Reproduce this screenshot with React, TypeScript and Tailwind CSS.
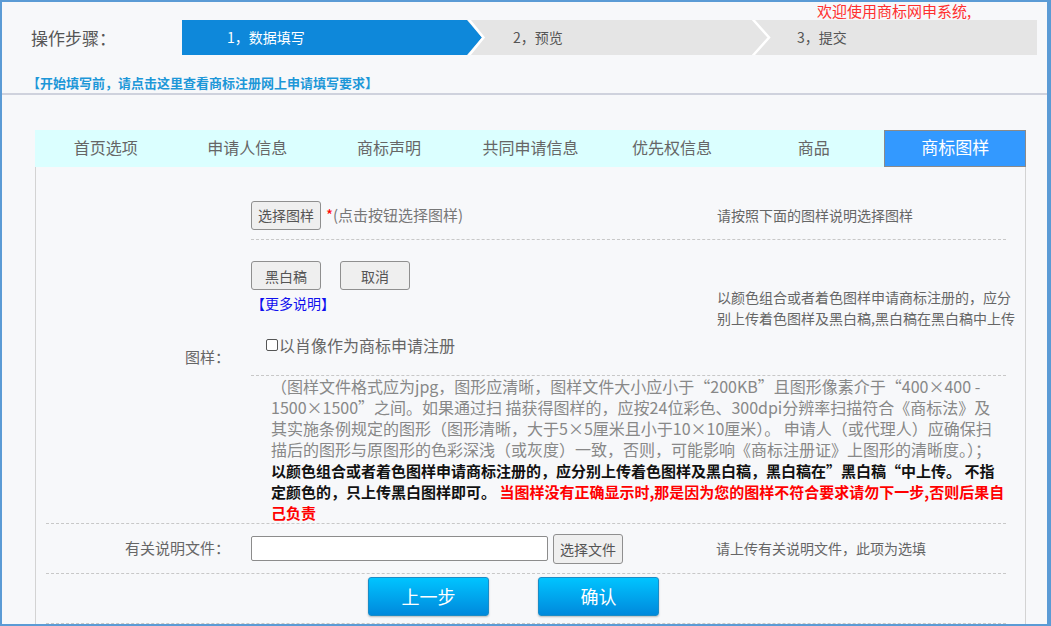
import React from "react";

const tabs = ["首页选项", "申请人信息", "商标声明", "共同申请信息", "优先权信息", "商品", "商标图样"];

const GrayButton = ({ label, className = "" }: { label: string; className?: string }) => (
  <button
    className={
      "h-[29px] w-[70px] shrink-0 rounded-[3px] border border-[#8f8f8f] bg-[#efefef] text-[14px] leading-none text-[#555] " +
      className
    }
  >
    {label}
  </button>
);

const BlueButton = ({ label }: { label: string }) => (
  <button className="h-[39px] w-[121px] rounded-[3px] border border-[#1a8cc6] bg-linear-to-b from-[#00c4ff] to-[#0089dc] text-[18px] text-white shadow-[0_1px_2px_rgba(0,0,0,0.25)]">
    {label}
  </button>
);

const App = () => {
  return (
    <div className="h-[626px] w-[1051px] overflow-hidden border-t-2 border-r-4 border-b-2 border-l-2 border-[#5b9bd5] bg-[#f7f8fa] font-['Noto_Sans_CJK_SC','Noto_Sans',sans-serif] flex flex-col">
      {/* header */}
      <div className="border-b-2 border-[#cfd2dd] pb-[2px]">
        <div className="h-[18px] pl-[815px] text-[15px] leading-[17px] text-[#ff3030] whitespace-nowrap">
          欢迎使用商标网申系统,
        </div>
        <div className="flex h-[35px] items-center pl-[29px]">
          <div className="w-[151px] text-[17px] text-[#555]">操作步骤：</div>
          <div className="flex h-[35px] w-[855px] bg-[#e5e5e5] text-[14px]">
            <div className="relative flex w-[284px] items-center bg-[#0e88da] pl-[45px] text-white">
              1，数据填写
              <svg className="absolute top-0 left-full z-10" width="24" height="35" viewBox="0 0 24 35">
                <polygon points="0,0 1,0 16,17.5 1,35 0,35" fill="#0e88da" />
                <polyline points="2.5,-1 17.5,17.5 2.5,36" fill="none" stroke="#fff" strokeWidth="2.5" />
              </svg>
            </div>
            <div className="relative flex w-[286px] items-center pl-[47px] text-[#555]">
              2，预览
              <svg className="absolute top-0 left-full z-10" width="24" height="35" viewBox="0 0 24 35">
                <polyline points="0.5,-1 17,17.5 0.5,36" fill="none" stroke="#fff" strokeWidth="2.5" />
              </svg>
            </div>
            <div className="flex flex-1 items-center pl-[45px] text-[#555]">3，提交</div>
          </div>
        </div>
        <div className="mt-[20px] pl-[25px] text-[13px] leading-[16px] font-bold text-[#1d97d8]">
          【开始填写前，请点击这里查看商标注册网上申请填写要求】
        </div>
      </div>

      {/* tabs */}
      <div className="mt-[35px] ml-[33px] grid h-[39px] w-[991px] grid-cols-7 bg-[#dbffff]">
        {tabs.map((t, i) =>
          i === tabs.length - 1 ? (
            <div key={t} className="flex items-center justify-center border border-[#8a8a8a] bg-[#3399ff] pb-[3px] text-[17px] text-white">
              {t}
            </div>
          ) : (
            <div key={t} className="flex items-center justify-center pb-[3px] text-[16px] text-[#666]">
              {t}
            </div>
          )
        )}
      </div>

      {/* content */}
      <div className="ml-[33px] w-[991px] flex-1 border-r border-l border-[#d3d3d3] pt-[24px] pr-[19px] pl-[10px]">
        <div className="flex border-b border-dashed border-[#c8c8c8]">
          <div className="flex w-[205px] shrink-0 items-center justify-end pr-[21px] text-[15px] text-[#666]">图样：</div>
          <div className="flex min-w-0 flex-1 flex-col">
            <div className="flex h-[49px] items-center border-b border-dashed border-[#c8c8c8]">
              <div className="flex w-[466px] shrink-0 items-center">
                <GrayButton label="选择图样" />
                <span className="ml-[5px] text-[15px] text-[#ff0000]">*</span>
                <span className="text-[15px] text-[#777]">(点击按钮选择图样)</span>
              </div>
              <div className="text-[14px] text-[#666] whitespace-nowrap">请按照下面的图样说明选择图样</div>
            </div>
            <div className="flex h-[136px] border-b border-dashed border-[#c8c8c8]">
              <div className="flex w-[466px] shrink-0 flex-col pt-[21px]">
                <div className="flex gap-[19px]">
                  <GrayButton label="黑白稿" />
                  <GrayButton label="取消" />
                </div>
                <div className="mt-[5px] text-[14px] leading-[16px] text-[#1010ee]">【更多说明】</div>
                <div className="mt-[24px] flex items-center pl-[15px] text-[16px] leading-[20px] text-[#666]">
                  <span className="mr-[1px] inline-block h-[12px] w-[12px] rounded-[2px] border border-[#555] bg-white" />
                  以肖像作为商标申请注册
                </div>
              </div>
              <div className="flex items-center text-[14px] leading-[21px] text-[#666] whitespace-nowrap">
                <div>
                  以颜色组合或者着色图样申请商标注册的，应分
                  <br />
                  别上传着色图样及黑白稿,黑白稿在黑白稿中上传
                </div>
              </div>
            </div>
            <div className="pl-[20px] text-[16px] leading-[21px] text-[#888] whitespace-nowrap">
              （图样文件格式应为jpg，图形应清晰，图样文件大小应小于“200KB”且图形像素介于“400×400 -
              <br />
              1500×1500”之间。如果通过扫 描获得图样的，应按24位彩色、300dpi分辨率扫描符合《商标法》及
              <br />
              其实施条例规定的图形（图形清晰，大于5×5厘米且小于10×10厘米）。 申请人（或代理人）应确保扫
              <br />
              描后的图形与原图形的色彩深浅（或灰度）一致，否则，可能影响《商标注册证》上图形的清晰度。）；
              <br />
              <span className="text-[15px] font-bold text-[#111]">
                以颜色组合或者着色图样申请商标注册的，应分别上传着色图样及黑白稿，黑白稿在”黑白稿“中上传。 不指
              </span>
              <br />
              <span className="text-[15px] font-bold text-[#111]">定颜色的，只上传黑白图样即可。 </span>
              <span className="text-[15px] font-bold text-[#ff0000]">
                {" "}
                当图样没有正确显示时,那是因为您的图样不符合要求请勿下一步,否则后果自
              </span>
              <br />
              <span className="text-[15px] font-bold text-[#ff0000]">己负责</span>
            </div>
          </div>
        </div>

        <div className="flex h-[50px] items-center border-b border-dashed border-[#c8c8c8]">
          <div className="w-[205px] shrink-0 pr-[21px] text-right text-[15px] text-[#666]">有关说明文件：</div>
          <div className="h-[25px] w-[297px] shrink-0 rounded-[2px] border border-[#8c8c8c] bg-white" />
          <GrayButton label="选择文件" className="ml-[5px] h-[30px]" />
          <div className="ml-[93px] text-[14px] text-[#666] whitespace-nowrap">请上传有关说明文件，此项为选填</div>
        </div>

        <div className="flex h-[50px] items-start gap-[49px] border-b border-dashed border-[#c8c8c8] pt-[3px] pl-[322px]">
          <BlueButton label="上一步" />
          <BlueButton label="确认" />
        </div>
      </div>
    </div>
  );
};

export default App;
